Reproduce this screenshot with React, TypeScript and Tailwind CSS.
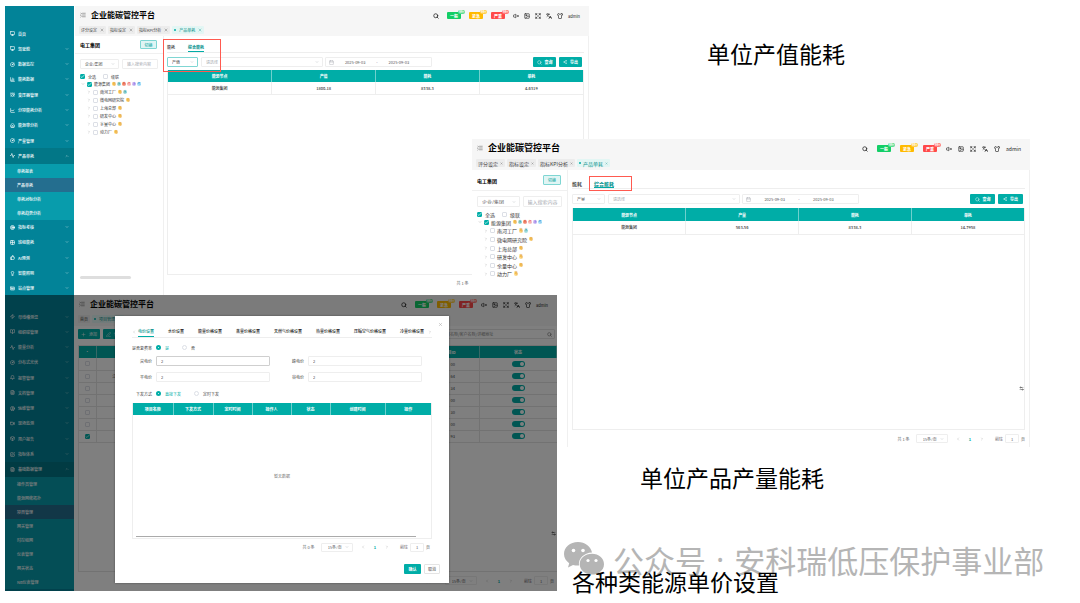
import React from "react";
import {
  AlarmClock, Activity, Bell, BookOpen, Box, Calendar, ChartColumn, ChartLine, Check, ChevronDown, ChevronLeft,
  ChevronRight, ChevronUp, CircleGauge, CircleUser, Expand, FileText, Grid2x2, House, IdCard, Image, Languages,
  Lightbulb, ListCollapse, Monitor, PenLine, Plus, Search, Settings2, Share2, Shirt, SquarePen,
  Target, ThumbsUp, Video, VolumeX, X, Zap,
} from "lucide-react";

type Icon = React.ComponentType<{ className?: string; strokeWidth?: number }>;
type Item = { icon: Icon; text: string; open?: boolean; leaf?: boolean; children?: string[]; active?: string };

const mainMenu: Item[] = [
  { icon: Monitor, text: "首页", leaf: true },
  { icon: Monitor, text: "驾驶舱" },
  { icon: CircleGauge, text: "数据监控" },
  { icon: ChartColumn, text: "能耗数据" },
  { icon: AlarmClock, text: "变压器管理" },
  { icon: ChartLine, text: "分项能耗分析" },
  { icon: House, text: "能源审分析" },
  { icon: CircleGauge, text: "产量管理" },
  { icon: Activity, text: "产品单耗", open: true, children: ["单耗报表", "产品单耗", "单耗对标分析", "单耗趋势分析"], active: "产品单耗" },
  { icon: Target, text: "指标考核" },
  { icon: Grid2x2, text: "班组能耗" },
  { icon: ThumbsUp, text: "AI预测" },
  { icon: Lightbulb, text: "智能照明" },
  { icon: IdCard, text: "站点管理" },
];

const settingsMenu: Item[] = [
  { icon: Zap, text: "母线槽测温" },
  { icon: BookOpen, text: "组织碳管理" },
  { icon: Activity, text: "能量分析" },
  { icon: CircleGauge, text: "分布式光伏" },
  { icon: Bell, text: "报警管理" },
  { icon: FileText, text: "文档管理" },
  { icon: CircleUser, text: "运维管理" },
  { icon: Video, text: "现场监测" },
  { icon: Box, text: "用户报告" },
  { icon: SquarePen, text: "指标体系" },
  {
    icon: FileText, text: "基础数据管理", open: true, active: "项目管理",
    children: ["操作员管理", "能源网络拓扑", "项目管理", "网关管理", "时控组网", "仪表管理", "网关状态", "NB仪表管理"],
  },
];

function Sidebar({ items, className }: { items: Item[]; className: string }) {
  return (
    <nav className={"flex w-[69px] shrink-0 flex-col bg-[#028398] text-[4px] text-white " + className}>
      {items.map((it) => (
        <React.Fragment key={it.text}>
          <a href="#" className={"flex min-h-0 flex-1 items-center gap-[3px] pr-[5px] pl-[5px] " + (it.open ? "bg-[#027787]" : "")}>
            <it.icon className="size-[5px]" strokeWidth={3} />
            <span className="flex-1 font-medium">{it.text}</span>
            {!it.leaf && (it.open ? <ChevronUp className="size-[4px]" /> : <ChevronDown className="size-[4px]" />)}
          </a>
          {it.children?.map((c) => (
            <a key={c} href="#" className={"flex h-[14px] shrink-0 items-center pl-[12px] font-medium " + (c === it.active ? "bg-[#246e8f]" : "bg-[#089cac]")}>
              {c}
            </a>
          ))}
        </React.Fragment>
      ))}
    </nav>
  );
}

function Alarm({ text, count, box, pill }: { text: string; count: string; box: string; pill: string }) {
  return (
    <button className={"relative flex h-[7px] w-[14px] items-center justify-center rounded-[1px] text-[4px] font-bold text-white " + box}>
      {text}
      <span className={"absolute -top-[2px] left-[11px] flex h-[4px] items-center rounded-full px-[1px] text-[3px] text-white " + pill}>{count}</span>
    </button>
  );
}

function Header({ big, tabs, tall }: { big?: boolean; tall?: boolean; tabs: { text: string; active?: boolean; fixed?: boolean }[] }) {
  const icons: Icon[] = [VolumeX, Image, Expand, Languages, Shirt];
  return (
    <header className="bg-[#f6f6f6] text-[#222]">
      <div className="flex h-[17px] items-center pr-[9px] pl-[5px]">
        <ListCollapse className="mr-[5px] size-[6px] text-[#555]" />
        <h1 className={"font-bold text-black " + (big ? "text-[9px]" : "text-[8px]")}>企业能碳管控平台</h1>
        <div className={"ml-auto flex items-center pt-[2px] " + (big ? "gap-[9px]" : "gap-[8px]")}>
          <Search className="size-[6px]" strokeWidth={3} />
          <Alarm text="一般" count="99+" box="bg-[#13ce66]" pill="bg-[#5cdc93]" />
          <Alarm text="紧急" count="99+" box="bg-[#ffba00]" pill="bg-[#ffcf4d]" />
          <Alarm text="严重" count="99+" box="bg-[#ff4949]" pill="bg-[#ff7a7a]" />
          <div className={"flex items-center " + (big ? "gap-[6px]" : "gap-[5px]")}>
            {icons.map((I, i) => <I key={i} className="size-[6px]" strokeWidth={2.5} />)}
            <span className={big ? "text-[5px]" : "text-[4px]"}>admin</span>
          </div>
        </div>
      </div>
      <div className={"flex items-center gap-[2px] pl-[4px] " + (big ? "h-[14px] text-[5px]" : tall ? "h-[14px] text-[4px]" : "h-[13px] text-[4px]")}>
        {tabs.map((t) => (
          <a key={t.text} href="#" className={"flex h-[8px] items-center rounded-[1px] px-[2px] " + (big ? "gap-[2px] " : "gap-[3px] ") + (t.active ? "bg-[#e3f6f4] text-[#078f8a]" : "bg-[#ececec] text-[#444]")}>
            {t.active && <span className="size-[2px] rounded-full bg-[#00ada7]" />}
            {t.text}
            {!t.fixed && <X className={big ? "size-[3px]" : "size-[4px]"} />}
          </a>
        ))}
      </div>
    </header>
  );
}

function Tick({ label, on }: { label: string; on?: boolean }) {
  return (
    <span className="relative flex shrink-0">
      <input type="checkbox" aria-label={label} defaultChecked={on}
        className="peer size-[5px] appearance-none rounded-[1px] border border-[#dcdfe6] bg-white checked:border-[#00ada7] checked:bg-[#00ada7]" />
      <Check className="pointer-events-none absolute inset-0 hidden size-[5px] text-white peer-checked:block" strokeWidth={3} />
    </span>
  );
}

function Pick({ label, value, className }: { label: string; value: string; className: string }) {
  return (
    <span className={"flex items-center rounded-[1px] border pr-[3px] pl-[4px] " + className}>
      <select aria-label={label} className="min-w-0 flex-1 appearance-none bg-transparent outline-none">
        <option>{value}</option>
      </select>
      <ChevronDown className="pointer-events-none size-[4px] text-[#a8abb2]" />
    </span>
  );
}

const energy = [
  { text: "电", cls: "bg-[#fdd98a] text-[#e08c00]" },
  { text: "水", cls: "bg-[#a8dfe0] text-[#12878c]" },
  { text: "热", cls: "bg-[#f9a08c] text-[#d43a1a]" },
  { text: "汽", cls: "bg-[#fbc4c4] text-[#e43b3b]" },
  { text: "冷", cls: "bg-[#cdbdf5] text-[#6d42d8]" },
  { text: "气", cls: "bg-[#a7dcf8] text-[#1689c8]" },
];
const tree = [
  { text: "能源集团", n: 6, root: true },
  { text: "南河工厂", n: 2 },
  { text: "微电网研究院", n: 1 },
  { text: "上海总部", n: 1 },
  { text: "研发中心", n: 1 },
  { text: "余量中心", n: 1 },
  { text: "动力厂", n: 1 },
];

function OrgPanel({ big }: { big?: boolean }) {
  return (
    <aside className={"flex shrink-0 flex-col border-r border-[#f0f0f0] " + (big ? "w-[96px] text-[5px]" : "w-[89px] text-[4px]")}>
      <div className={"flex items-center justify-between border-b border-[#f0f0f0] pr-[6px] pl-[5px] " + (big ? "h-[21px]" : "h-[18px]")}>
        <h2 className="text-[5px] font-bold text-black">电工集团</h2>
        <button className={"rounded-[1px] border border-[#7fd6d3] bg-[#e0f5f4] text-[4px] text-[#00a09a] " + (big ? "h-[10px] w-[18px]" : "h-[9px] w-[17px]")}>切换</button>
      </div>
      <div className={"mt-[5px] flex gap-[3px] px-[5px] text-[#555] " + (big ? "h-[11px]" : "h-[10px]")}>
        <Pick label="类型" value="企业/集团" className="min-w-0 flex-1 border-[#eee]" />
        <input aria-label="搜索" placeholder="输入搜索内容" className="min-w-0 flex-1 rounded-[1px] border border-[#eee] pl-[4px] outline-none placeholder:text-[#a8abb2]" />
      </div>
      <div className="mt-[4px] flex h-[7px] items-center gap-[7px] px-[5px] text-[#444]">
        <label className="flex items-center gap-[3px]"><Tick label="全选" on />全选</label>
        <label className="flex items-center gap-[3px]"><Tick label="级联" />级联</label>
      </div>
      <ul className={"flex flex-col text-[#333] " + (big ? "h-[60px]" : "h-[56px]")}>
        {tree.map((t) => (
          <li key={t.text} className={"flex min-h-0 flex-1 items-center gap-[2px] " + (t.root ? "pl-[6px]" : "pl-[12px]")}>
            {t.root ? <ChevronDown className="size-[4px] text-[#999]" /> : <ChevronRight className="size-[4px] text-[#999]" />}
            <Tick label={t.text} on={t.root} />
            <span>{t.text}</span>
            <span className="flex gap-[1px]">
              {energy.slice(0, t.n).map((e) => (
                <span key={e.text} className={"flex size-[4px] items-center justify-center rounded-full text-[3px] " + e.cls}>{e.text}</span>
              ))}
            </span>
          </li>
        ))}
      </ul>
      {!big && <div className="mt-auto mb-[17px] ml-[5px] h-[3px] w-[51px] rounded-full bg-[#dedede]" />}
    </aside>
  );
}

function Pager({ total, className }: { total: string; className: string }) {
  return (
    <div className={"flex items-center justify-end text-[4px] text-[#606266] " + className}>
      <span className="mr-[6px]">{total}</span>
      <Pick label="每页条数" value="15条/页" className="h-[9px] w-[32px] border-[#eee] pl-[6px]" />
      <button aria-label="上一页" className="ml-[8px]"><ChevronLeft className="size-[4px] text-[#999]" /></button>
      <button className="mx-[9px] font-bold text-[#00ada7]">1</button>
      <button aria-label="下一页"><ChevronRight className="size-[4px] text-[#999]" /></button>
      <label className="ml-[11px] flex items-center gap-[2px]">
        前往
        <input defaultValue="1" className="h-[9px] w-[14px] rounded-[1px] border border-[#eee] text-center outline-none" />
        页
      </label>
    </div>
  );
}

function DataTable({ heads, rows, big }: { heads: string[]; rows: string[][]; big?: boolean }) {
  return (
    <table className="w-full table-fixed border-collapse text-center text-[4px]">
      <thead>
        <tr className={"bg-[#00ada7] text-white " + (big ? "h-[13px]" : "h-[12px]")}>
          {heads.map((h) => <th key={h} className="border-r border-[#6fd0cd] p-0 font-bold last:border-r-0">{h}</th>)}
        </tr>
      </thead>
      <tbody>
        {rows.map((r, i) => (
          <tr key={i} className={"border-b border-[#eee] text-[#333] " + (big ? "h-[13px]" : "h-[12px]")}>
            {r.map((c, j) => <td key={j} className="border-r border-[#eee] p-0 font-medium last:border-r-0">{c}</td>)}
          </tr>
        ))}
      </tbody>
    </table>
  );
}

function UnitPage({ big, kind, row }: { big?: boolean; kind: string; row: string[] }) {
  return (
    <div className="flex min-w-0 flex-1 flex-col">
      <Header big={big} tabs={[{ text: "评分设定" }, { text: "指标设定" }, { text: "指标KPI分析" }, { text: "产品单耗", active: true }]} />
      <div className="flex min-h-0 flex-1">
        <OrgPanel big={big} />
        <section className={"flex min-w-0 flex-1 flex-col border-r border-[#f0f0f0] pr-[4px] " + (big ? "pl-[4px]" : "pl-[3px]")}>
          <div className={"flex items-end border-b border-[#eee] font-medium text-[#333] " + (big ? "h-[19px] gap-[12px] text-[5px]" : "h-[17px] gap-[13px] text-[4px]")}>
            <button className="h-[9px] border-b border-transparent">能耗</button>
            <button className="h-[9px] border-b border-[#00ada7] font-bold text-[#00908b]">综合能耗</button>
          </div>
          <div className={"flex h-[10px] items-stretch text-[4px] text-[#555] " + (big ? "mt-[5px] mb-[4px]" : "mt-[4px] mb-[3px]")}>
            <Pick label="指标" value={kind} className={big ? "w-[33px] border-[#eee]" : "w-[31px] border-[#7fd6d3] text-[#333]"} />
            <Pick label="节点" value="请选择" className={"ml-[3px] border-[#eee] text-[#a8abb2] " + (big ? "w-[132px]" : "w-[122px]")} />
            <div className={"ml-[2px] flex items-center rounded-[1px] border border-[#eee] px-[3px] " + (big ? "w-[117px]" : "w-[107px]")}>
              <Calendar className="size-[5px] text-[#a8abb2]" />
              <input aria-label="开始日期" defaultValue="2025-09-03" className="min-w-0 flex-1 text-center outline-none" />
              <span>-</span>
              <input aria-label="结束日期" defaultValue="2025-09-03" className="min-w-0 flex-1 text-center outline-none" />
              <span className="w-[8px]" />
            </div>
            <div className="mr-[2px] ml-auto flex gap-[3px] font-bold text-white">
              <button className={"flex items-center justify-center gap-[3px] rounded-[1px] bg-[#00ada7] " + (big ? "w-[25px]" : "w-[23px]")}><Search className="size-[5px]" />查询</button>
              <button className={"flex items-center justify-center gap-[3px] rounded-[1px] bg-[#00ada7] " + (big ? "w-[25px]" : "w-[23px]")}><Share2 className="size-[4px]" />导出</button>
            </div>
          </div>
          <div className="relative min-h-0 flex-1 border border-t-0 border-[#eee]">
            <DataTable big={big} heads={["能源节点", kind, "能耗", "单耗"]} rows={[row]} />
            {big && <Settings2 className="absolute right-0 bottom-[38px] size-[5px] text-[#333]" strokeWidth={2} />}
          </div>
          <Pager total="共 1 条" className={big ? "h-[17px]" : "mb-[5px] h-[16px]"} />
        </section>
      </div>
    </div>
  );
}

function Toggle({ label }: { label: string }) {
  return (
    <input type="checkbox" role="switch" aria-label={label} defaultChecked
      className="relative block h-[6px] w-[13px] appearance-none rounded-full bg-[#00ada7] before:absolute before:top-[1px] before:right-[1px] before:size-[4px] before:rounded-full before:bg-white" />
  );
}

function ProjectPage() {
  const rows = ["00", "64", "34", "00", "30", "00", "93"];
  return (
    <div className="flex min-w-0 flex-1 flex-col bg-white">
      <Header tall tabs={[{ text: "首页", fixed: true }, { text: "项目管理", active: true }]} />
      <div className="flex min-h-0 flex-1 flex-col pt-[3px] pl-[4px] text-[4px] text-[#444]">
        <div className="flex h-[10px] gap-[3px]">
          <button className="flex w-[22px] items-center justify-center gap-[3px] rounded-[1px] bg-[#00ada7] text-white"><Plus className="size-[5px]" />添加</button>
          <button className="flex w-[22px] items-center justify-center gap-[3px] rounded-[1px] bg-[#00ada7] text-white"><PenLine className="size-[5px]" />修改</button>
          <label className="mr-[2px] ml-auto flex w-[136px] items-center rounded-[1px] border border-[#e4e4e4] px-[2px]">
            <input aria-label="搜索项目" placeholder="项目名称/客户名称/详细地址" className="min-w-0 flex-1 bg-transparent pl-[20px] outline-none placeholder:text-[#888]" />
            <Search className="size-[5px]" />
          </label>
        </div>
        <div className="relative mt-[6px] min-h-0 flex-1 border border-r-0 border-[#e4e4e4]">
          <table className="w-full table-fixed border-collapse text-center">
            <colgroup>
              <col className="w-[17px]" /><col className="w-[60px]" /><col /><col className="w-[60px]" /><col className="w-[77px]" />
            </colgroup>
            <thead>
              <tr className="h-[12px] bg-[#00ada7] text-white">
                {["·", "项目名称", "地址", "项目ID", "状态"].map((h) => <th key={h} className="border-r border-[#6fd0cd] p-0">{h}</th>)}
              </tr>
            </thead>
            <tbody>
              {rows.map((r, i) => (
                <tr key={i} className="h-[12px] border-b border-[#e4e4e4]">
                  <td className="border-r border-[#e4e4e4] p-0"><div className="flex justify-center"><Tick label={"选择第" + (i + 1) + "行"} on={i === 6} /></div></td>
                  <td className="p-0">{i === 1 ? "江苏安科瑞电器" : ""}</td>
                  <td className="p-0" />
                  <td className="border-r border-[#e4e4e4] p-0 pr-[24px] text-right">{r}</td>
                  <td className="p-0"><div className="flex justify-center"><Toggle label={"启用第" + (i + 1) + "行"} /></div></td>
                </tr>
              ))}
            </tbody>
          </table>
          <Settings2 className="absolute right-[1px] bottom-[35px] size-[5px] text-[#222]" strokeWidth={2} />
        </div>
        <Pager total="共 7 条" className="mb-[2px] h-[17px] pr-[3px]" />
      </div>
    </div>
  );
}

function Choice({ name, text, on }: { name: string; text: string; on?: boolean }) {
  return (
    <label className={"flex items-center gap-[4px] " + (on ? "text-[#00ada7]" : "text-[#444]")}>
      <input type="radio" name={name} defaultChecked={on} className="size-[5px] appearance-none rounded-full border border-[#dcdfe6] checked:border-2 checked:border-[#00ada7]" />
      {text}
    </label>
  );
}

function Field({ label, strong }: { label: string; strong?: boolean }) {
  return (
    <label className="flex flex-1 items-center gap-[4px]">
      <span className="w-[20px] text-right">{label}</span>
      <input defaultValue="2" className={"h-[10px] min-w-0 flex-1 rounded-[1px] border pl-[4px] outline-none " + (strong ? "border-[#cfcfcf]" : "border-[#eee]")} />
    </label>
  );
}

function PriceDialog() {
  const tabs = ["电价设置", "水价设置", "能量价格设置", "蒸量价格设置", "天然气价格设置", "热量价格设置", "压缩空气价格设置", "冷量价格设置"];
  const cols = [
    ["项目名称", "w-[40px]"], ["下发方式", "w-[40px]"], ["定时时间", "w-[39px]"], ["操作人", "w-[39px]"],
    ["状态", "w-[39px]"], ["创建时间", "w-[55px]"], ["操作", ""],
  ];
  return (
    <div role="dialog" aria-label="电价设置" className="absolute top-[21px] right-[108px] bottom-[8px] left-[110px] flex flex-col bg-white px-[17px] text-[4px] text-[#444] shadow-[0_0_2px_rgba(0,0,0,0.4)]">
      <button aria-label="关闭" className="-mr-[11px] mt-[6px] self-end text-[#999]"><X className="size-[5px]" /></button>
      <div className="flex h-[11px] items-stretch border-b border-[#eee] text-[#222]">
        <ChevronLeft className="mt-[3px] mr-[2px] size-[4px] shrink-0 text-[#999]" />
        <div className="flex gap-[14px]">
          {tabs.map((t, i) => (
            <button key={t} className={"border-b pb-[2px] font-medium whitespace-nowrap " + (i === 0 ? "border-[#00ada7] font-bold text-[#00908b]" : "border-transparent")}>{t}</button>
          ))}
        </div>
        <ChevronRight className="mt-[3px] ml-auto size-[4px] shrink-0 text-[#999]" />
      </div>
      <div className="mt-[4px] flex h-[11px] items-center gap-[13px]">
        <span className="-mr-[9px] w-[20px] text-right">是否复费率</span>
        <Choice name="multi" text="是" on /><Choice name="multi" text="否" />
      </div>
      <div className="mt-[2px] flex h-[12px] items-center gap-[14px] pr-[10px]"><Field label="尖电价" strong /><Field label="峰电价" /></div>
      <div className="mt-[4px] flex h-[12px] items-center gap-[14px] pr-[10px]"><Field label="平电价" /><Field label="谷电价" /></div>
      <div className="mt-[5px] flex h-[11px] items-center gap-[13px]">
        <span className="-mr-[9px] w-[20px] text-right">下发方式</span>
        <Choice name="mode" text="直接下发" on /><Choice name="mode" text="定时下发" />
      </div>
      <div className="mt-[4px] flex min-h-0 flex-1 flex-col border border-t-0 border-[#eee]">
        <table className="w-full table-fixed border-collapse">
          <thead>
            <tr className="h-[12px] bg-[#00ada7] text-white">
              {cols.map(([t, w]) => <th key={t} className={"border-r border-[#6fd0cd] p-0 last:border-r-0 " + w}>{t}</th>)}
            </tr>
          </thead>
        </table>
        <p className="flex flex-1 items-center justify-center text-[#777]">暂无数据</p>
        <div className="mr-[15px] mb-px ml-[3px] h-px bg-[#aaa]" />
      </div>
      <Pager total="共 0 条" className="h-[16px] pr-[2px]" />
      <div className="-mr-[8px] mt-[9px] mb-[9px] flex justify-end gap-[3px]">
        <button className="h-[10px] w-[17px] rounded-[1px] bg-[#00ada7] font-bold text-white">确认</button>
        <button className="h-[10px] w-[16px] rounded-[1px] border border-[#e4e4e4]">取消</button>
      </div>
    </div>
  );
}

export default function App() {
  return (
    <main className="relative min-h-[603px] w-full overflow-hidden bg-white font-['Noto_Sans_CJK_SC',sans-serif] leading-none">
      <section className="absolute top-[6px] right-[491px] left-[5px] flex h-[290px] bg-white">
        <Sidebar items={mainMenu} className="pt-[20px]" />
        <div className="flex min-w-0 flex-1 pl-px">
          <UnitPage kind="产值" row={["能源集团", "1800.18", "8338.3", "4.6319"]} />
        </div>
      </section>
      <div className="absolute top-[39px] left-[163px] h-[33px] w-[58px] border border-[#ff5a50]" />

      <section className="absolute top-[139px] right-[50px] left-[472px] flex h-[308px] bg-white">
        <UnitPage big kind="产量" row={["能源集团", "563.56", "8338.3", "14.7958"]} />
      </section>
      <div className="absolute top-[176px] left-[589px] h-[15px] w-[43px] border border-[#ff5a50]" />

      <section className="absolute top-[295px] right-[523px] left-[5px] flex h-[296px] bg-white">
        <Sidebar items={settingsMenu} className="pt-[14px] pb-[2px]" />
        <ProjectPage />
        <div className="absolute inset-0 bg-black/50" />
        <PriceDialog />
      </section>

      <div className="absolute top-[541px] left-[563px] flex items-center gap-[8px] whitespace-nowrap text-[#b5b5b5]">
        <svg viewBox="0 0 42 36" className="h-[36px] w-[42px]" aria-hidden="true">
          <path fill="currentColor" d="M15 1C7 1 1 6.300 1 13c0 3.800 2 7 5.200 9.200L5 26.500l5-2.600c1.600.5 3.200.7 5 .7h1C15 17.500 21 11.800 29 11.500 27.700 5.500 22 1 15 1Z" />
          <path fill="currentColor" d="M29 12.800c-7 0-12.300 4.700-12.300 10.400S22 33.500 29 33.500c1.500 0 2.900-.2 4.200-.6l4.200 2.300-1.100-3.800c2.900-1.900 4.700-4.900 4.700-8.200 0-5.700-5.300-10.400-12-10.400Z" />
          <g fill="#fff"><circle cx="10.500" cy="9.500" r="1.800" /><circle cx="20" cy="9.500" r="1.800" /><circle cx="25" cy="19.500" r="1.600" /><circle cx="33" cy="19.500" r="1.600" /></g>
        </svg>
        <p className="flex items-center gap-[10px] text-[31px]">
          <span>公众号</span>
          <span className="font-['Noto_Sans',sans-serif]">·</span>
          <span>安科瑞低压保护事业部</span>
        </p>
      </div>

      <p className="absolute top-[42px] left-[707px] text-[23px] whitespace-nowrap text-black">单位产值能耗</p>
      <p className="absolute top-[466px] left-[640px] text-[23px] whitespace-nowrap text-black">单位产品产量能耗</p>
      <p className="absolute top-[570px] left-[572px] text-[23px] whitespace-nowrap text-black">各种类能源单价设置</p>
    </main>
  );
}
